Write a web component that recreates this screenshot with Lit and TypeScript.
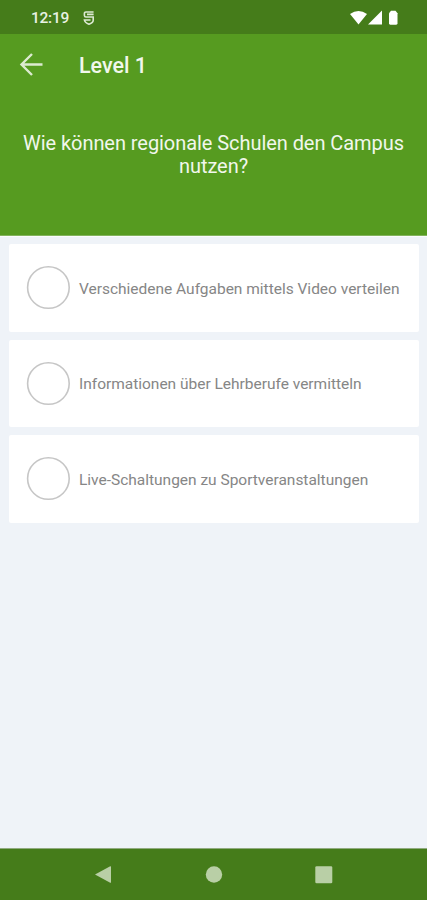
import { LitElement, html, css } from "lit";
import { customElement, property } from "lit/decorators.js";

@customElement("answer-card")
class AnswerCard extends LitElement {
  @property() label = "";

  static styles = css`
    :host {
      display: flex;
      align-items: center;
      box-sizing: border-box;
      height: 87.5px;
      padding-left: 17px;
      background: #fff;
      border-radius: 2px;
    }
    .ring {
      flex: none;
      display: block;
      fill: none;
      stroke: #c6c6c6;
      stroke-width: 1.6px;
    }
    .label {
      margin-left: 8px;
      padding-top: 2px;
      font-size: 15.5px;
      line-height: 20px;
      color: #868686;
      white-space: nowrap;
      letter-spacing: -0.01px;
    }
  `;

  render() {
    return html`
      <svg class="ring" width="45" height="45" viewBox="0 0 45 45"><circle cx="22.4" cy="22.5" r="20.8" /></svg>
      <span class="label">${this.label}</span>
    `;
  }
}

@customElement("app-root")
class AppRoot extends LitElement {
  private answers = [
    "Verschiedene Aufgaben mittels Video verteilen",
    "Informationen über Lehrberufe vermitteln",
    "Live-Schaltungen zu Sportveranstaltungen",
  ];

  static styles = css`
    :host {
      display: flex;
      flex-direction: column;
      width: 100%;
      height: 900px;
      overflow: hidden;
      background: #eff3f8;
      font-family: Roboto, sans-serif;
    }
    svg {
      display: block;
    }
    .status {
      flex: none;
      display: flex;
      align-items: center;
      justify-content: space-between;
      box-sizing: border-box;
      height: 34px;
      padding: 2px 28px 0 31px;
      background: #457c1a;
      color: #e9f2e3;
    }
    .left {
      display: flex;
      align-items: center;
      gap: 14px;
    }
    .time {
      font-size: 15.5px;
      line-height: 18px;
      font-weight: 500;
      letter-spacing: -0.25px;
    }
    .head {
      flex: none;
      box-sizing: border-box;
      height: 202px;
      background: #569b20;
      color: #f1f7ec;
      border-bottom: 1px solid #82b35c;
    }
    .bar {
      display: flex;
      align-items: center;
      height: 62px;
      padding-left: 19px;
    }
    .title {
      margin-left: 36px;
      padding-top: 2px;
      font-size: 21.5px;
      font-weight: 500;
      line-height: 24px;
    }
    .question {
      margin: 36px 0 0;
      text-align: center;
      font-size: 20px;
      font-weight: 400;
      line-height: 23px;
      letter-spacing: -0.06px;
    }
    .list {
      flex: 1;
      display: flex;
      flex-direction: column;
      gap: 8px;
      padding: 7px 8px 0 9px;
      border-top: 1px solid #fafcfd;
    }
    .nav {
      flex: none;
      display: flex;
      justify-content: center;
      box-sizing: border-box;
      height: 52px;
      border-top: 1px solid #91ab80;
      background: #457c1a;
    }
  `;

  render() {
    return html`
      <div class="status">
        <div class="left">
          <span class="time">12:19</span>
          <svg width="12" height="16" viewBox="0 0 12 16" fill="none" stroke="#dce9d3" stroke-width="1.6">
            <path d="M10.6 2H3Q1.4 2 1.4 3.6V5.6Q1.4 7 3 7H10.2V10.2Q10.2 12.8 6 14.2Q1.8 12.8 1.4 10H7.5M4 4.4H10.6" />
          </svg>
        </div>
        <svg width="49" height="16" viewBox="0 0 49 16" fill="#fff">
          <path d="M0 4Q8.5-2 17 4L8.5 14.5Z" />
          <path d="M32 .5V14.5H18Z" />
          <path d="M41 .8H45.5L47.5 3.2V13.3Q47.5 14.7 46.2 14.7H40.3Q39 14.7 39 13.3V3.2Z" />
        </svg>
      </div>
      <div class="head">
        <div class="bar">
          <svg width="24" height="24" viewBox="0 0 24 24" fill="none" stroke="#dcebd0" stroke-width="2.4">
            <path d="M23.5 11.5H2.5M13 1L2.5 11.5L13 22" />
          </svg>
          <span class="title">Level 1</span>
        </div>
        <p class="question">Wie können regionale Schulen den Campus<br />nutzen?</p>
      </div>
      <div class="list">
        ${this.answers.map((a) => html`<answer-card .label=${a}></answer-card>`)}
      </div>
      <div class="nav">
        <svg width="427" height="51" viewBox="0 0 427 51" fill="#b9cfa6">
          <path d="M95 25.5L110.2 17.2Q111 17 111 17.8V33.2Q111 34 110.2 33.8Z" />
          <circle cx="214" cy="25.5" r="8.2" />
          <rect x="315.3" y="17.2" width="17" height="17" rx="1.3" />
        </svg>
      </div>
    `;
  }
}
